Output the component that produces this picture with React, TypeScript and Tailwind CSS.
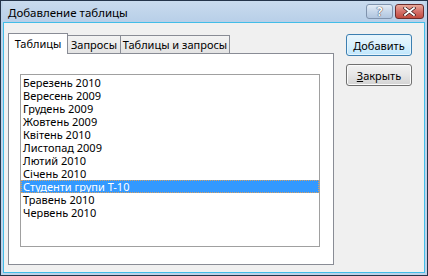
import React from "react";

const items = [
  "Березень 2010",
  "Вересень 2009",
  "Грудень 2009",
  "Жовтень 2009",
  "Квітень 2010",
  "Листопад 2009",
  "Лютий 2010",
  "Січень 2010",
  "Студенти групи Т-10",
  "Травень 2010",
  "Червень 2010",
];

export default function App() {
  return (
    <div
      className="w-[428px] h-[276px] flex flex-col border border-[#24344a] bg-[#bdd3ea] px-[2px] pb-[2px]"
      style={{ fontFamily: '"Noto Sans", "Segoe UI", sans-serif' }}
    >
      {/* title bar */}
      <div className="h-[21px] flex items-center bg-gradient-to-b from-[#c9dbee] to-[#b8cfe8] relative">
        <span className="ml-[5px] text-[11.5px] leading-[14px] text-black mt-[3px]">Добавление таблицы</span>
        <div className="ml-auto flex items-start gap-[2px] mr-[1px] self-start mt-[3px]">
          <div className="w-[27px] h-[15px] rounded-[3px] border border-[#7f93ad] bg-gradient-to-b from-[#e3ecf6] via-[#c7d7ea] to-[#b1c6df] flex items-center justify-center">
            <span className="text-[12px] leading-[12px] font-bold text-white" style={{ textShadow: "0 0 1px #334, 0 0 1px #334" }}>?</span>
          </div>
          <div className="w-[29px] h-[15px] rounded-[3px] border border-[#6b2c2c] bg-gradient-to-b from-[#e9a99a] via-[#d4706a] to-[#c04a3e] flex items-center justify-center">
            <svg width="13" height="9" viewBox="0 0 13 9">
              <path d="M2 1 L11 8 M11 1 L2 8" stroke="#3a1a1a" strokeWidth="3.2" strokeLinecap="square" />
              <path d="M2 1 L11 8 M11 1 L2 8" stroke="#ffffff" strokeWidth="1.8" strokeLinecap="square" />
            </svg>
          </div>
        </div>
      </div>
      {/* client area */}
      <div className="flex-1 border border-[#42bde8] bg-[#f0f0f0] flex pl-[4px] pt-[10px]">
        {/* tab control */}
        <div className="w-[326px] flex flex-col">
          <div className="flex items-end h-[20px] text-[11px] leading-[13px] text-black">
            <div className="relative z-10 w-[60px] h-[21px] -mb-px bg-white border border-b-0 border-[#898c95] flex items-start justify-center pt-[3px]">
              Таблицы
            </div>
            <div className="-ml-px w-[54px] h-[18px] bg-gradient-to-b from-[#f3f3f3] to-[#e3e3e3] border border-b-0 border-[#898c95] flex items-start justify-center pt-[2px]">
              Запросы
            </div>
            <div className="-ml-px w-[110px] h-[18px] bg-gradient-to-b from-[#f3f3f3] to-[#e3e3e3] border border-b-0 border-[#898c95] flex items-start justify-center pt-[2px]">
              Таблицы и запросы
            </div>
          </div>
          <div className="h-[212px] border border-[#898c95] bg-white pl-[11px] pt-[20px]">
            <div className="w-[300px] h-[173px] border border-[#a0a0a0] bg-white pt-px text-[11px] leading-[13px]">
              {items.map((t, i) =>
                i === 8 ? (
                  <div
                    key={t}
                    className="h-[13px] overflow-hidden bg-[#3399ff] text-white pl-[1px] border border-dotted border-[#d8a060] flex items-center"
                  >
                    {t}
                  </div>
                ) : (
                  <div key={t} className="h-[13px] overflow-hidden pl-[2px] text-black flex items-center">
                    {t}
                  </div>
                )
              )}
            </div>
          </div>
        </div>
        {/* buttons */}
        <div className="ml-[12px] pt-[1px] flex flex-col gap-[8px] text-[11px]">
          <div className="w-[66px] h-[22px] rounded-[3px] border border-[#3c7fb1] bg-gradient-to-b from-[#eaf6fd] via-[#d9f0fc] to-[#bee6fd] flex items-center justify-center shadow-[inset_0_0_0_1px_#e6f4fc]">
            <span className="text-black leading-[13px]"><span className="underline">Д</span>обавить</span>
          </div>
          <div className="w-[66px] h-[22px] rounded-[3px] border border-[#707070] bg-gradient-to-b from-[#f2f2f2] via-[#e6e6e6] to-[#d3d3d3] flex items-center justify-center shadow-[inset_0_0_0_1px_#fbfbfb]">
            <span className="text-black leading-[13px]"><span className="underline">З</span>акрыть</span>
          </div>
        </div>
      </div>
    </div>
  );
}
